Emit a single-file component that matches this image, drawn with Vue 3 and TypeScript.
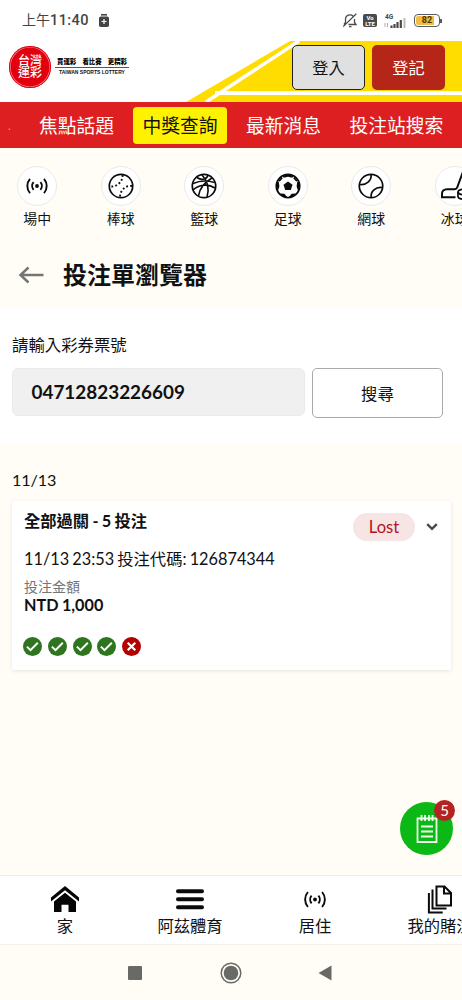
<script setup lang="ts">
interface Entry { id: string; label: string }

const topics: string[] = ['焦點話題', '中獎查詢', '最新消息', '投注站搜索']
const activeTopic = '中獎查詢'

const sports: Entry[] = [
  { id: 'live', label: '場中' },
  { id: 'baseball', label: '棒球' },
  { id: 'basketball', label: '籃球' },
  { id: 'soccer', label: '足球' },
  { id: 'tennis', label: '網球' },
  { id: 'hockey', label: '冰球' },
]

const tabs: Entry[] = [
  { id: 'home', label: '家' },
  { id: 'menu', label: '阿茲體育' },
  { id: 'live', label: '居住' },
  { id: 'bets', label: '我的賭注' },
]

const legs: boolean[] = [true, true, true, true, false]
</script>

<template>
  <div class="phone">
    <div class="status">
      <span class="clock">上午<b>11:40</b></span>
      <svg class="s-plus" width="10" height="13" viewBox="0 0 10 13">
        <rect x="2" y="0" width="6" height="1.6" fill="#444" />
        <rect x="0" y="2.4" width="10" height="10.6" rx="1.8" fill="#444" />
        <path d="M5 5v5M2.5 7.5h5" stroke="#fff" stroke-width="1.2" />
      </svg>
      <span class="spacer"></span>
      <svg class="s-bell" width="16" height="15" viewBox="0 0 16 15" fill="none" stroke="#4a4a4a" stroke-width="1.3">
        <path d="M2 11.500l1.500-2V6C3.500 3.500 5.500 1.800 8 1.800c1.200 0 2.200.4 3 1.200M12.500 6v3.500l1.500 2H6.500M7 13.700h2.500M14.300 .8L1.200 13.600" />
      </svg>
      <div class="volte"><span>Vo</span><span>LTE</span></div>
      <div class="signal">
        <span>4G</span>
        <svg width="22" height="8" viewBox="0 0 22 8">
          <path d="M1 3v4M3.500 3v4" stroke="#aaa" stroke-width="1" />
          <path d="M7.500 5.500v2.500M10.500 4v4M13.500 2v6M16.800 0v8" stroke="#4a4a4a" stroke-width="2.200" />
          <path d="M20.500 -2v10" stroke="#bbb" stroke-width="2" />
        </svg>
      </div>
      <div class="battery"><span>82</span></div>
      <i class="nub"></i>
    </div>

    <header class="header">
      <svg class="stripes" width="462" height="61" viewBox="0 0 462 61">
        <path d="M290 0H462V61H186Z" fill="#fd0" />
        <path d="M299 0L206 61" stroke="#fff" stroke-width="3.500" />
        <path d="M215 52H462" stroke="#fff" stroke-width="4" />
      </svg>
      <div class="logo"><span>台灣</span><span>運彩</span></div>
      <div class="slogan">
        <div class="slogan-zh"><span>買運彩</span><span>看比賽</span><span>更精彩</span></div>
        <div class="slogan-en">TAIWAN SPORTS LOTTERY</div>
      </div>
      <button class="btn login">登入</button>
      <button class="btn register">登記</button>
    </header>

    <nav class="topics">
      <span class="dot">.</span>
      <a v-for="t in topics" :key="t" :class="{ active: t === activeTopic }">{{ t }}</a>
    </nav>

    <div class="sports">
      <div v-for="s in sports" :key="s.id" class="sport">
        <div class="disc">
          <svg width="26" height="26" viewBox="0 0 26 26" fill="none" stroke="#0b0b0b" stroke-width="1.700">
            <template v-if="s.id === 'live'">
              <circle cx="13" cy="13" r="1.900" fill="#0b0b0b" stroke="none" />
              <path d="M9.600 9.200a5.800 5.800 0 0 0 0 7.600M16.400 9.200a5.800 5.800 0 0 1 0 7.600M6 5.800a11 11 0 0 0 0 14.400M20 5.800a11 11 0 0 1 0 14.400" stroke-width="1.900" />
            </template>
            <template v-else-if="s.id === 'baseball'">
              <circle cx="13" cy="13" r="11.700" />
              <path d="M14.500 2C15 8.500 9 14 2.500 13.500M24 13C17.500 12 12 17.500 12 24" stroke-width="1.900" stroke-dasharray="1.800 2.200" />
            </template>
            <template v-else-if="s.id === 'basketball'">
              <circle cx="13" cy="13" r="11.700" />
              <path d="M2 10.500C9 7.500 17 7.500 23.500 9.500M11 2C16 7 18.500 15 16 24M17 2C16 6 11 8 6 4.500M2 17C8 11.500 17 10.500 24 15M7.500 23C8.500 15 14 9 21 5" stroke-width="1.600" />
            </template>
            <template v-else-if="s.id === 'soccer'">
              <circle cx="13" cy="13" r="11.600" stroke-width="1.900" />
              <path d="M13 8.500l4.500 3.200-1.700 5.200h-5.600l-1.700-5.200z" fill="#0b0b0b" stroke="none" />
              <path d="M7.500 2.800L13 1l5.500 1.800L17.300 4.800 13 3.800 8.700 4.800zM1.300 9.500L3.800 9l.6 4.500-1.200 3.500-2-1.500zM24.700 9.500L22.200 9l-.6 4.500 1.200 3.500 2-1.500zM5.500 20.500l3.800.2 2.700 3-1 1-4-1.500zM20.500 20.500l-3.800.2-2.700 3 1 1 4-1.500zM3.200 8l3.600-4.500.8 2L4.800 8.500zM22.800 8l-3.600-4.500-.8 2 2.800 3z" fill="#0b0b0b" stroke="none" />
            </template>
            <template v-else-if="s.id === 'tennis'">
              <circle cx="13" cy="13" r="11.700" />
              <path d="M13 1.500C14 7.500 8 12.500 1.800 11.500M24.300 14.500C18 13.500 12 18.500 13.300 24.500" />
            </template>
            <template v-else>
              <path d="M22 -4L15.200 14.500c-.5 1.300-1.300 1.700-2.700 1.700H5c-3.300 0-5 2-5 4.500v3.600h13.500" stroke-width="2" />
              <ellipse cx="23" cy="19" rx="7" ry="2.800" />
              <path d="M16 19v4.500c0 1.500 3 2.700 7 2.700" />
            </template>
          </svg>
        </div>
        <span>{{ s.label }}</span>
      </div>
    </div>

    <div class="title-row">
      <svg width="26" height="18" viewBox="0 0 26 18" fill="none" stroke="#757575" stroke-width="2.500">
        <path d="M25.500 9H3M10.500 1.500L2.500 9l8 7.500" />
      </svg>
      <h1>投注單瀏覽器</h1>
    </div>

    <section class="search">
      <label>請輸入彩券票號</label>
      <div class="search-row">
        <div class="field">04712823226609</div>
        <button class="go">搜尋</button>
      </div>
    </section>

    <main class="results">
      <div class="date">11/13</div>
      <article class="card">
        <div class="card-head">
          <strong>全部過關 - 5 投注</strong>
          <span class="lost">Lost</span>
          <svg width="12" height="8" viewBox="0 0 12 8" fill="none" stroke="#4a4a4a" stroke-width="2.500">
            <path d="M1.200 1.200L6 5.800l4.800-4.600" />
          </svg>
        </div>
        <div class="code">11/13 23:53 投注代碼: 126874344</div>
        <div class="amount-label">投注金額</div>
        <div class="amount">NTD 1,000</div>
        <div class="legs">
          <svg v-for="(won, i) in legs" :key="i" width="19" height="19" viewBox="0 0 19 19" fill="none" stroke="#fff">
            <circle cx="9.500" cy="9.500" r="9.500" :fill="won ? '#2f751f' : '#b50000'" stroke="none" />
            <path v-if="won" d="M3.900 9.600l3.600 3.500 7.300-7.300" stroke-width="2" />
            <path v-else d="M5.700 5.700l7.600 7.600M13.300 5.700l-7.600 7.600" stroke-width="2.200" />
          </svg>
        </div>
      </article>
      <div class="fab">
        <svg width="24" height="30" viewBox="0 0 24 30" fill="none" stroke="#e9ffe5" stroke-width="1.800">
          <path d="M2.500 4.500h19v23.500h-19zM6.500 1v6M10 1v6M14 1v6M17.500 1v6M6 12.500h12M6 17.500h12M6 22.500h12" />
        </svg>
        <span>5</span>
      </div>
    </main>

    <nav class="tabs">
      <div v-for="t in tabs" :key="t.id" class="tab">
        <svg width="30" height="28" viewBox="0 0 30 28" fill="none" stroke="#0b0b0b">
          <g v-if="t.id === 'home'" fill="#050505" stroke="none">
            <path d="M1 11.500L15 0l14 11.500v4L15 4.300 1 15.500z" />
            <path d="M4 15.500L15 6.700l11 8.800V26h-7.500v-7.300h-7V26H4z" />
          </g>
          <path v-else-if="t.id === 'menu'" d="M3 5.300h24M3 13.300h24M3 21.300h24" stroke-width="4" stroke-linecap="round" />
          <template v-else-if="t.id === 'live'">
            <circle cx="15" cy="13.500" r="1.900" fill="#0b0b0b" stroke="none" />
            <path d="M11.600 9.700a5.800 5.800 0 0 0 0 7.600M18.400 9.700a5.800 5.800 0 0 1 0 7.600M7.900 6a11.500 11.500 0 0 0 0 15M22.100 6a11.500 11.500 0 0 1 0 15" stroke-width="1.900" />
          </template>
          <path v-else d="M11.500 0.500h8l6.500 6.500v12.500H11.500zM19 1v6.500h7M7.500 3.500v19h14M3.900 7v19.500h13.800" stroke-width="2" />
        </svg>
        <span>{{ t.label }}</span>
      </div>
    </nav>

    <div class="system">
      <svg width="14" height="14" viewBox="0 0 14 14"><rect width="14" height="14" rx="1" fill="#696965" /></svg>
      <svg width="22" height="22" viewBox="0 0 22 22">
        <circle cx="11" cy="11" r="9.800" fill="none" stroke="#696965" stroke-width="1.500" />
        <circle cx="11" cy="11" r="7.300" fill="#696965" />
      </svg>
      <svg class="back" width="14" height="16" viewBox="0 0 14 16"><path d="M13.500 .5v15L.5 8z" fill="#696965" /></svg>
    </div>
  </div>
</template>

<style>
body {
  overflow: hidden;
}
</style>

<style scoped>
* {
  box-sizing: border-box;
}
.phone {
  width: 462px;
  height: 1000px;
  display: flex;
  flex-direction: column;
  overflow: hidden;
  background: #fffdf5;
  color: #111;
  font-family: Lato, "Noto Sans CJK TC", sans-serif;
  white-space: nowrap;
}
svg {
  display: block;
  flex: none;
  overflow: visible;
}
button {
  font-family: inherit;
  padding: 0;
}
.status {
  height: 41px;
  flex: none;
  background: #fff;
  display: flex;
  align-items: center;
  padding: 0 20px 0 22px;
  color: #444;
}
.clock {
  font: 14px/20px Roboto, "Noto Sans CJK TC", sans-serif;
}
.clock b {
  font-weight: 500;
  font-size: 14.500px;
  letter-spacing: 0.400px;
}
.s-plus {
  margin-left: 10px;
}
.spacer {
  flex: 1;
}
.volte {
  width: 14px;
  height: 13px;
  margin-left: 5px;
  border-radius: 2px;
  background: #4a4a4a;
  color: #fff;
  font: 700 6px/6px Roboto, sans-serif;
  display: flex;
  flex-direction: column;
  align-items: center;
  padding-top: 1px;
}
.signal {
  margin-left: 7px;
  width: 24px;
  font: 700 6.500px/6px Roboto, sans-serif;
}
.signal span {
  padding-left: 1px;
  display: block;
}
.battery {
  width: 26px;
  height: 13px;
  margin-left: 6px;
  border: 1.500px solid #555b66;
  border-radius: 4px;
  background: linear-gradient(90deg, #f0bd45 80%, #fff 80%) content-box;
  padding: 1px;
  font: 700 9px/9px Roboto, sans-serif;
  color: #4d3605;
  text-align: center;
}
.battery span {
  display: block;
}
.nub {
  width: 2px;
  height: 4px;
  background: #555b66;
}
.header {
  height: 61px;
  flex: none;
  position: relative;
  background: #fff;
  display: flex;
  padding: 4px 17px 0 9px;
}
.stripes {
  position: absolute;
  left: 0;
  top: 0;
  overflow: hidden;
}
.logo,
.slogan,
.btn {
  position: relative;
}
.logo {
  width: 42px;
  height: 42px;
  margin-top: 1px;
  border-radius: 50%;
  background: #e2000f;
  box-shadow: inset 0 0 0 1px #e2000f, inset 0 0 0 1.600px #f48e95;
  color: #fff;
  font-size: 12px;
  font-weight: 500;
  line-height: 12px;
  display: flex;
  flex-direction: column;
  align-items: center;
  justify-content: center;
}
.slogan {
  width: 74px;
  margin-left: 4px;
  padding-top: 12px;
}
.slogan-zh {
  display: flex;
  justify-content: space-between;
  padding: 0 2px 1px;
  font-size: 6.400px;
  line-height: 9px;
  font-weight: 900;
  color: #000;
}
.slogan-en {
  border-top: 1px solid #555;
  font: 700 5px/8px "Liberation Sans", sans-serif;
  text-align: center;
}
.btn {
  width: 73px;
  height: 45px;
  border-radius: 5px;
  font-size: 16.200px;
  padding-bottom: 2px;
}
.login {
  margin-left: auto;
  background: #e0e0e0;
  border: 1px solid #222;
  color: #111;
}
.register {
  margin-left: 7px;
  background: #b52619;
  border: 0;
  color: #fff;
}
.topics {
  height: 46px;
  flex: none;
  background: #dd1f21;
  color: #fff;
  display: flex;
  align-items: center;
  gap: 9.400px;
  padding: 0 0 0 8px;
  font-size: 18.800px;
  overflow: hidden;
}
.topics a {
  flex: none;
  height: 37px;
  line-height: 38px;
  padding: 0 9.500px;
  border-radius: 4px;
}
.topics .active {
  background: #fff200;
  color: #111;
}
.dot {
  width: 12px;
  font-size: 12px;
  opacity: 0.5;
}
.sports {
  height: 93px;
  flex: none;
  display: flex;
  margin-left: -4.500px;
  padding-top: 18px;
}
.sport {
  flex: 0 0 83.500px;
  display: flex;
  flex-direction: column;
  align-items: center;
  font-size: 13.900px;
  line-height: 20px;
}
.disc {
  width: 40px;
  height: 40px;
  border-radius: 50%;
  background: #fff;
  border: 1px solid #e9eaee;
  display: flex;
  align-items: center;
  justify-content: center;
  margin-bottom: 3px;
}
.title-row {
  height: 67px;
  flex: none;
  display: flex;
  align-items: center;
  padding-left: 18px;
}
h1 {
  margin: 0 0 0 19px;
  font-size: 24px;
  line-height: 30px;
  font-weight: 700;
}
.search {
  height: 136px;
  flex: none;
  background: #fff;
  padding: 26px 19px 0 12px;
}
label {
  display: block;
  font-size: 16.400px;
  line-height: 22px;
}
.search-row {
  display: flex;
  gap: 7.500px;
  margin-top: 12px;
}
.field {
  width: 292.500px;
  height: 48px;
  border: 1px solid #eaeaea;
  border-radius: 6px;
  background: #f0f0f0;
  padding-left: 18.500px;
  font-size: 18.900px;
  font-weight: 700;
  line-height: 46px;
}
.go {
  width: 131px;
  height: 50px;
  border: 1px solid #aaa;
  border-radius: 5px;
  background: #fff;
  color: #111;
  font-size: 16.400px;
}
.results {
  flex: 1;
  padding: 24px 11px 0 12px;
  position: relative;
}
.date {
  font-size: 16.200px;
  line-height: 23px;
  letter-spacing: -0.150px;
}
.card {
  margin-top: 10px;
  height: 169px;
  border-radius: 2px;
  background: #fff;
  box-shadow: 0 1px 4px rgba(0, 0, 0, 0.1);
  padding: 12px 13px 0 12px;
}
.card-head {
  display: flex;
  align-items: center;
  height: 28px;
}
.card-head strong {
  flex: 1;
  font-size: 16.300px;
  line-height: 20px;
  word-spacing: -0.700px;
  padding-bottom: 13px;
}
.lost {
  width: 62px;
  height: 28px;
  margin-right: 11px;
  border-radius: 14px;
  background: #f7e4e5;
  color: #b4131c;
  font-size: 16.600px;
  line-height: 28px;
  text-align: center;
}
.code {
  margin-top: 7px;
  font-size: 16.300px;
  line-height: 22px;
  word-spacing: -1px;
}
.amount-label {
  margin-top: 8px;
  font-size: 14px;
  line-height: 18px;
  color: #757575;
}
.amount {
  font-size: 16.200px;
  line-height: 18px;
  font-weight: 700;
  word-spacing: -0.500px;
}
.legs {
  display: flex;
  gap: 5.700px;
  margin: 23px 0 0 -0.700px;
}
.fab {
  position: absolute;
  right: 9px;
  bottom: 20px;
  width: 53px;
  height: 53px;
  border-radius: 50%;
  background: #0bb815;
  display: flex;
  align-items: center;
  justify-content: center;
}
.fab span {
  position: absolute;
  right: -2px;
  top: -2px;
  width: 21px;
  height: 21px;
  border-radius: 50%;
  background: #b52222;
  color: #fff;
  font-size: 15px;
  line-height: 21px;
  text-align: center;
}
.tabs {
  height: 70px;
  flex: none;
  display: flex;
  background: #fff;
  border-top: 1px solid #eee;
  border-bottom: 1px solid #f0f0ec;
  padding: 10px 0 0 2.500px;
  overflow: hidden;
}
.tab {
  flex: 0 0 125px;
  display: flex;
  flex-direction: column;
  align-items: center;
  font-size: 16.300px;
  line-height: 22px;
}
.tab span {
  margin-top: 1px;
}
.system {
  height: 55px;
  flex: none;
  display: flex;
  align-items: center;
  justify-content: center;
  gap: 78px;
}
.back {
  margin-left: -2px;
  margin-right: 2px;
}
</style>
